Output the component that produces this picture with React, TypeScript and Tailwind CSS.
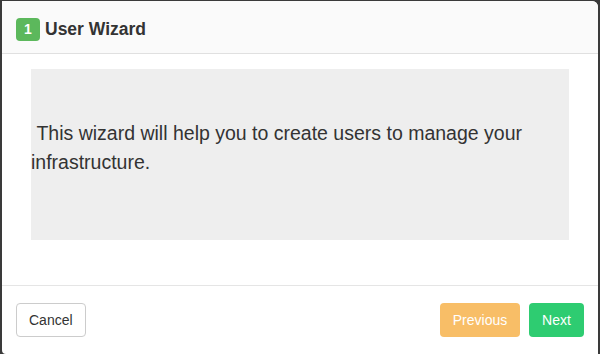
import React from 'react'

export default function App() {
  return (
    <div className="w-[600px] h-[354px] bg-[#3a3a3a] pl-[2px] pt-[1px] pr-[2px] overflow-hidden" style={{ fontFamily: '"Liberation Sans", Arial, sans-serif' }}>
      <div className="h-[353px] bg-white rounded-tr-[6px] rounded-bl-[4px] flex flex-col">
        {/* header */}
        <div className="h-[53px] shrink-0 bg-[#fafafa] border-b border-[#e0e0e0] rounded-tr-[6px] flex items-center pt-[5px] pl-[14px] gap-[5px]">
          <span className="w-[24px] h-[23px] rounded-[4px] bg-[#5cb85c] text-white text-[14px] font-bold flex items-center justify-center">1</span>
          <h4 className="text-[17.5px] font-bold text-[#333]">User Wizard</h4>
        </div>

        {/* body */}
        <div className="pt-[15px] px-[29px] h-[231px] shrink-0">
          <div className="h-[171px] bg-[#eeeeee] pt-[50px]">
            <p className="text-[19.5px] leading-[29px] text-[#333] font-light">
              &nbsp;This wizard will help you to create users to manage your infrastructure.
            </p>
          </div>
        </div>

        {/* footer */}
        <div className="border-t border-[#e5e5e5] flex-1 flex items-start justify-between pt-[17px] pl-[14px] pr-[14px]">
          <button className="h-[34px] px-[12px] border border-[#cccccc] rounded-[4px] bg-white text-[14px] text-[#333]">Cancel</button>
          <div className="flex gap-[9px]">
            <button className="h-[34px] w-[80px] rounded-[4px] bg-[#f8be67] text-white text-[14px]">Previous</button>
            <button className="h-[34px] w-[55px] rounded-[4px] bg-[#2ecc71] text-white text-[14px]">Next</button>
          </div>
        </div>
      </div>
    </div>
  )
}
